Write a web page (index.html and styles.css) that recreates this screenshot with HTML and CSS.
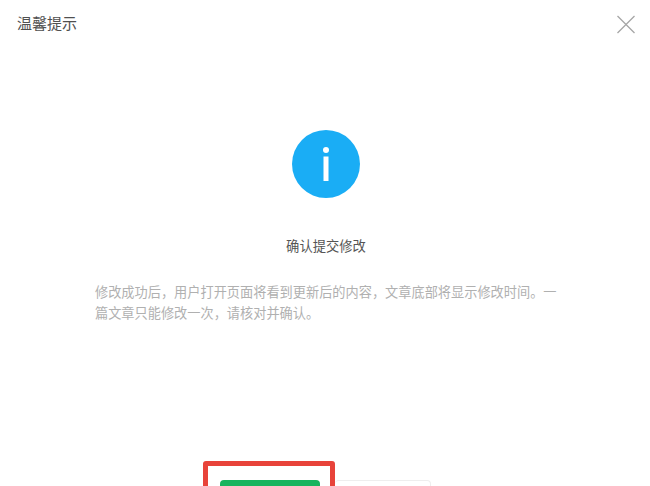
FILE: index.html
```html
<!doctype html>
<html>
<head>
  <meta charset="utf-8" />
  <meta name="viewport" content="width=device-width, initial-scale=1.0" />
  <title>温馨提示</title>
  <link rel="stylesheet" href="styles.css">
</head>
<body>
  <div class="dialog">
    <div class="dialog-head">
      <h1>温馨提示</h1>
      <svg class="close" width="20" height="20" viewBox="0 0 20 20">
        <path d="M1.5 1 L18.5 18 M18.5 1 L1.5 18" stroke="#a6a6a6" stroke-width="1.3" fill="none" />
      </svg>
    </div>

    <div class="dialog-body">
      <svg class="info-icon" width="68" height="68" viewBox="0 0 68 68">
        <circle cx="34" cy="34" r="34" fill="#1aadf5" />
        <circle cx="34" cy="20" r="3" fill="#fff" />
        <rect x="31.5" y="26.5" width="5" height="24.5" fill="#fff" />
      </svg>
      <h2>确认提交修改</h2>
      <p>修改成功后，用户打开页面将看到更新后的内容，文章底部将显示修改时间。一篇文章只能修改一次，请核对并确认。</p>
    </div>

    <div class="dialog-foot">
      <div class="highlight">
        <button class="btn btn-primary"></button>
      </div>
      <button class="btn btn-default"></button>
    </div>
  </div>
</body>
</html>
```

FILE: styles.css
```css
html, body {
  height: 100%;
}
body {
  font-family: "Liberation Sans", "Noto Sans CJK SC", sans-serif;
  background: #fff;
  margin: 0;
  overflow: hidden;
}
.dialog {
  height: 486px;
  overflow: hidden;
}
.dialog-head {
  display: flex;
  justify-content: space-between;
  align-items: flex-start;
  padding: 15px 14px 0 17px;
}
.dialog-head h1 {
  font-size: 15px;
  line-height: 18px;
  font-weight: normal;
  color: #505050;
  margin: 0;
}
.dialog-body {
  padding: 95px 93px 0 95px;
  text-align: center;
}
.info-icon {
  display: block;
  margin: 0 auto;
}
.dialog-body h2 {
  font-size: 13.3px;
  line-height: 20px;
  font-weight: normal;
  color: #555;
  margin: 39px 0 0;
}
.dialog-body p {
  font-size: 13.2px;
  line-height: 21px;
  color: #b0b0b0;
  text-align: left;
  margin: 25px -4px 0 0;
}
.dialog-foot {
  display: flex;
  align-items: flex-start;
  padding: 137px 0 0 203px;
}
.highlight {
  border: 5px solid #e8433a;
  border-radius: 3px;
  padding: 14px 10px 0 12px;
  height: 40px;
}
.btn {
  display: block;
  height: 40px;
  padding: 0;
  border-radius: 4px;
  cursor: pointer;
}
.btn-primary {
  width: 100px;
  background: #17b45e;
  border: 0;
}
.btn-default {
  width: 96px;
  margin-top: 19px;
  background: #fff;
  border: 1px solid #eee;
  border-left: 0;
}
```
